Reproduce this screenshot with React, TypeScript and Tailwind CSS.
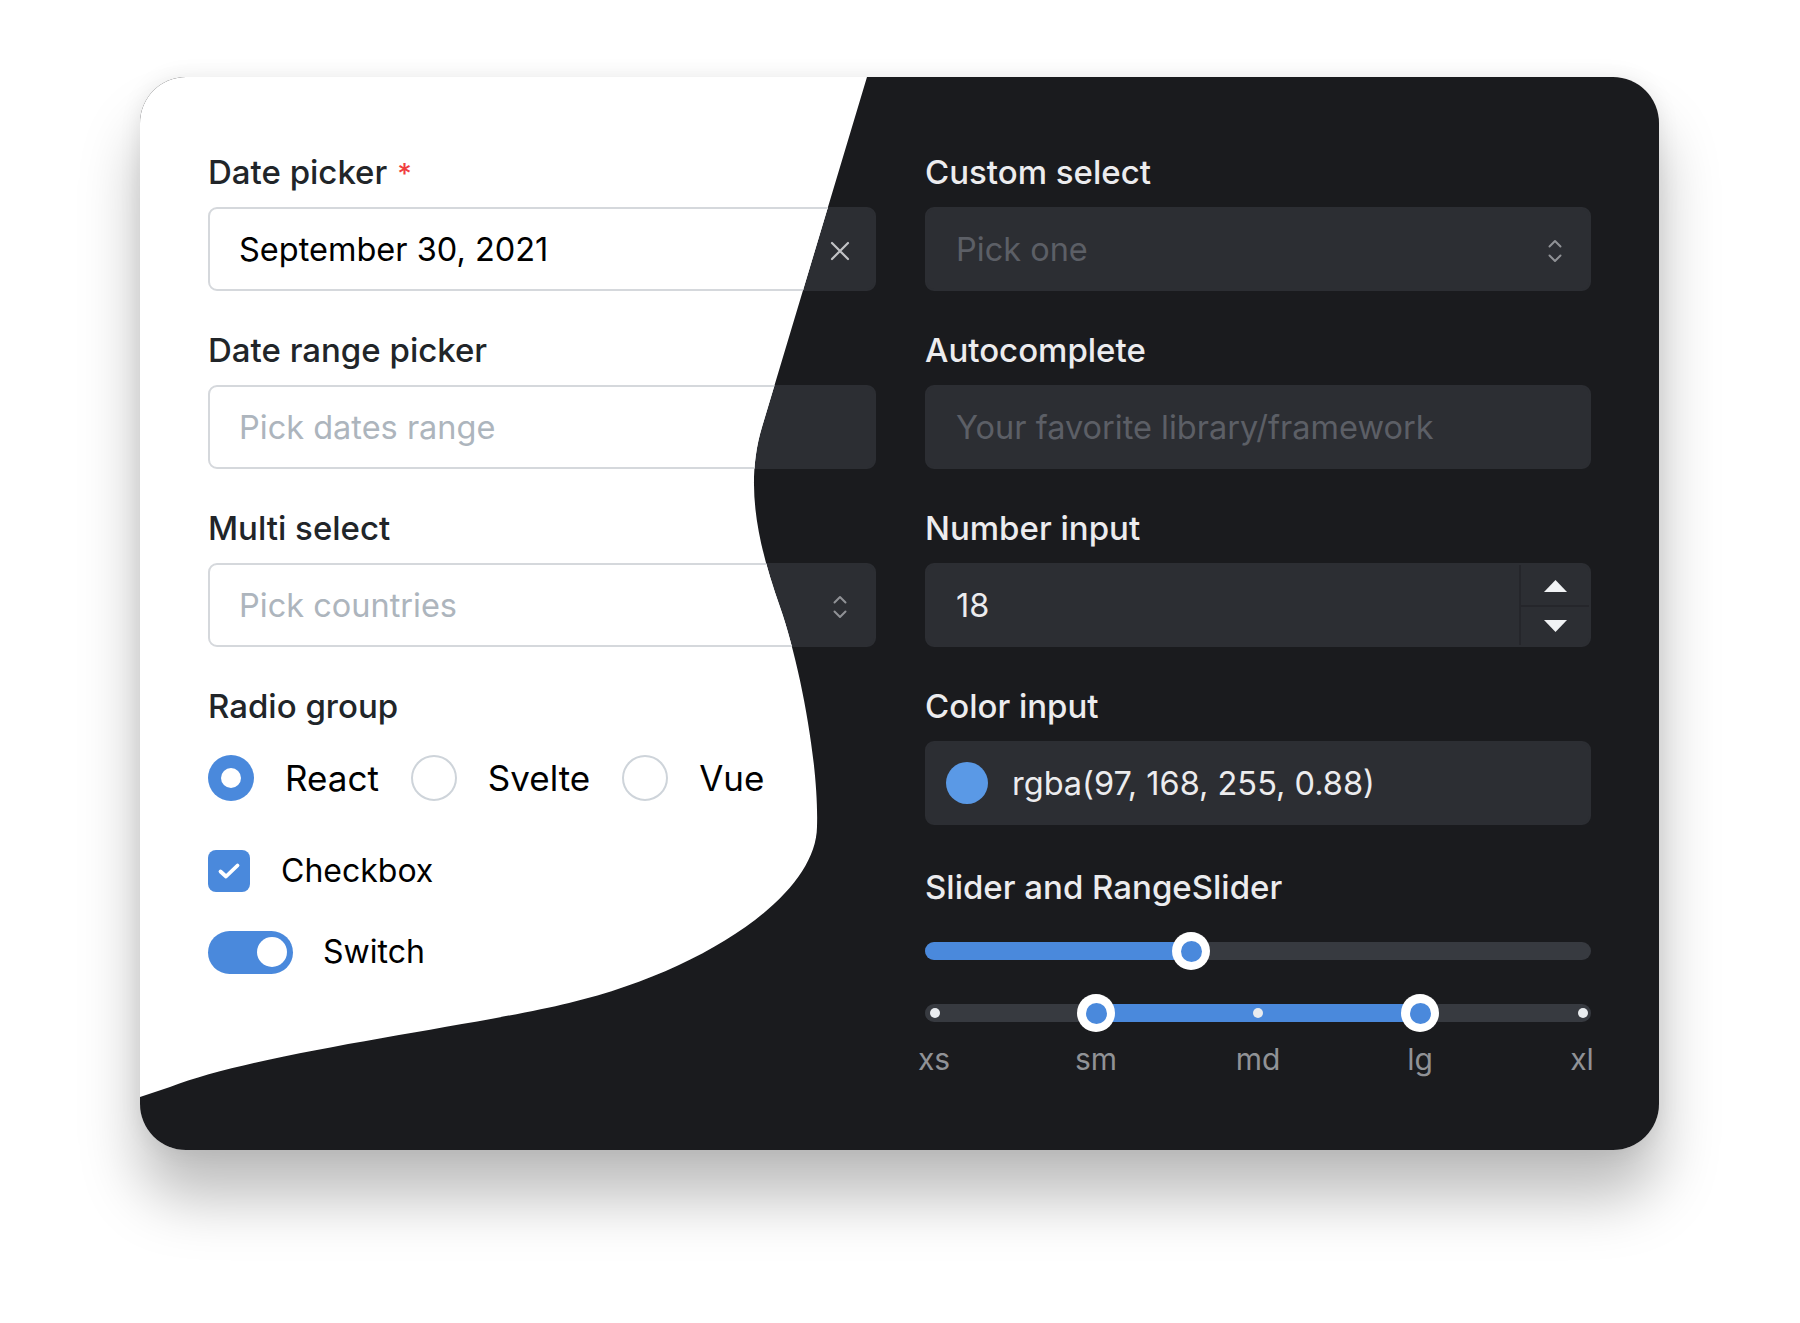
import clsx from 'clsx';

const BLUE = 'bg-[#4a89dc]';

// white part of the card, in card coordinates (1519 x 1073)
const LIGHT_PATH =
  'M0,0 L727,0 L622,350 C604,410 619,470 640,530 C661,590 679,690 677,750 C676,820 560,895 429,926 C330,950 120,975 30,1010 L0,1020 Z';

const Label = ({ dark, children, required }: { dark: boolean; children: string; required?: boolean }) => (
  <div className={clsx('h-[40px] text-[33px] leading-[40px] font-medium', dark ? 'text-[#ececee]' : 'text-[#212529]')}>
    {children}
    {required && <span className="ml-[10px] text-[28px] text-[#f03e3e]">*</span>}
  </div>
);

const inputCls = (dark: boolean) =>
  clsx(
    'mt-[15px] flex h-[84px] items-center rounded-[9px] border-2 pt-[3px] text-[32.5px]',
    dark ? 'border-[#2c2e33] bg-[#2c2e33]' : 'border-[#d5d8dc] bg-white'
  );

const Chevrons = ({ dark }: { dark: boolean }) => (
  <svg width="16" height="28" viewBox="0 0 16 28" fill="none" className={dark ? 'text-[#909296]' : 'text-[#868e96]'}>
    <polyline points="2.5,9.5 8,4 13.5,9.5" stroke="currentColor" strokeWidth="2" strokeLinecap="round" strokeLinejoin="round" />
    <polyline points="2.5,18.5 8,24 13.5,18.5" stroke="currentColor" strokeWidth="2" strokeLinecap="round" strokeLinejoin="round" />
  </svg>
);

const Field = ({
  dark,
  label,
  first,
  required,
  children,
}: {
  dark: boolean;
  label: string;
  first?: boolean;
  required?: boolean;
  children: React.ReactNode;
}) => (
  <div className={first ? '' : 'mt-[39px]'}>
    <Label dark={dark} required={required}>
      {label}
    </Label>
    {children}
  </div>
);

const Radio = ({ dark, checked, label }: { dark: boolean; checked?: boolean; label: string }) => (
  <div className="flex items-center gap-[31px]">
    {checked ? (
      <div className={clsx('flex h-[46px] w-[46px] items-center justify-center rounded-full', BLUE)}>
        <div className="h-[20px] w-[20px] rounded-full bg-white" />
      </div>
    ) : (
      <div
        className={clsx(
          'h-[46px] w-[46px] rounded-full border-2',
          dark ? 'border-[#373a40] bg-[#25262b]' : 'border-[#ced4da] bg-white'
        )}
      />
    )}
    <span className={clsx('text-[35px] leading-[46px]', dark ? 'text-[#ececee]' : 'text-black')}>{label}</span>
  </div>
);

const Thumb = ({ left }: { left: string }) => (
  <div className={clsx('absolute top-0 flex h-[38px] w-[38px] items-center justify-center rounded-full bg-white', left)}>
    <div className={clsx('h-[21px] w-[21px] rounded-full', BLUE)} />
  </div>
);

const Form = ({ dark }: { dark: boolean }) => {
  const text = dark ? 'text-[#ececee]' : 'text-black';
  const placeholder = dark ? 'text-[#5c5f66]' : 'text-[#adb5bd]';
  const track = dark ? 'bg-[#373a40]' : 'bg-[#e9ecef]';

  return (
    <div
      className={clsx(
        "grid h-full grid-cols-[668px_666px] gap-x-[49px] pl-[68px] pt-[75px] font-['Inter',sans-serif]",
        dark ? 'bg-[#1a1b1e]' : 'bg-white'
      )}
    >
      {/* left column */}
      <div className="flex flex-col">
        <Field dark={dark} label="Date picker" first required>
          <div className={clsx(inputCls(dark), 'justify-between pl-[29px] pr-[24px]')}>
            <span className={text}>September 30, 2021</span>
            <svg width="20" height="20" viewBox="0 0 20 20" className={dark ? 'text-[#c1c2c5]' : 'text-[#868e96]'}>
              <path d="M2 2 L18 18 M18 2 L2 18" stroke="currentColor" strokeWidth="2.2" strokeLinecap="round" />
            </svg>
          </div>
        </Field>
        <Field dark={dark} label="Date range picker">
          <div className={clsx(inputCls(dark), 'pl-[29px]')}>
            <span className={placeholder}>Pick dates range</span>
          </div>
        </Field>
        <Field dark={dark} label="Multi select">
          <div className={clsx(inputCls(dark), 'justify-between pl-[29px] pr-[26px]')}>
            <span className={placeholder}>Pick countries</span>
            <Chevrons dark={dark} />
          </div>
        </Field>
        <Field dark={dark} label="Radio group">
          <div className="mt-[29px] flex items-center gap-[32px]">
            <Radio dark={dark} checked label="React" />
            <Radio dark={dark} label="Svelte" />
            <Radio dark={dark} label="Vue" />
          </div>
        </Field>
        <div className="mt-[46px] flex items-center gap-[31px]">
          <div className={clsx('flex h-[42px] w-[42px] items-center justify-center rounded-[8px]', BLUE)}>
            <svg width="24" height="18" viewBox="0 0 24 18" fill="none">
              <polyline points="3.5,9.5 9,14.5 20.5,3.5" stroke="white" strokeWidth="3.8" strokeLinecap="round" strokeLinejoin="round" />
            </svg>
          </div>
          <span className={clsx('text-[32px]', text)}>Checkbox</span>
        </div>
        <div className="mt-[33px] flex items-center gap-[30px]">
          <div className={clsx('flex h-[43px] w-[85px] items-center justify-end rounded-full pr-[6px]', BLUE)}>
            <div className="h-[30px] w-[30px] rounded-full bg-white" />
          </div>
          <span className={clsx('text-[32px]', text)}>Switch</span>
        </div>
      </div>

      {/* right column */}
      <div className="flex flex-col">
        <Field dark={dark} label="Custom select" first>
          <div className={clsx(inputCls(dark), 'justify-between pl-[29px] pr-[26px]')}>
            <span className={placeholder}>Pick one</span>
            <Chevrons dark={dark} />
          </div>
        </Field>
        <Field dark={dark} label="Autocomplete">
          <div className={clsx(inputCls(dark), 'pl-[29px]')}>
            <span className={placeholder}>Your favorite library/framework</span>
          </div>
        </Field>
        <Field dark={dark} label="Number input">
          <div className={clsx(inputCls(dark), '!pt-0 items-stretch overflow-hidden')}>
            <div className={clsx('flex flex-1 items-center pl-[29px] pt-[3px]', text)}>18</div>
            <div className={clsx('flex w-[70px] flex-col border-l-2', dark ? 'border-[#25262b]' : 'border-[#ced4da]')}>
              <div
                className={clsx(
                  'flex flex-1 items-center justify-center border-b-2 pt-[2px]',
                  dark ? 'border-[#25262b]' : 'border-[#ced4da]'
                )}
              >
                <svg width="23" height="12" viewBox="0 0 23 12">
                  <polygon points="11.5,0 23,12 0,12" className={dark ? 'fill-[#f1f3f5]' : 'fill-[#495057]'} />
                </svg>
              </div>
              <div className="flex flex-1 items-center justify-center">
                <svg width="23" height="12" viewBox="0 0 23 12">
                  <polygon points="0,0 23,0 11.5,12" className={dark ? 'fill-[#f1f3f5]' : 'fill-[#495057]'} />
                </svg>
              </div>
            </div>
          </div>
        </Field>
        <Field dark={dark} label="Color input">
          <div className={clsx(inputCls(dark), 'gap-[24px] pl-[19px]')}>
            <div className="-mt-[3px] h-[42px] w-[42px] rounded-full bg-[rgba(97,168,255,0.88)]" />
            <span className={text}>rgba(97, 168, 255, 0.88)</span>
          </div>
        </Field>
        <div className="mt-[42px]">
          <Label dark={dark}>Slider and RangeSlider</Label>
        </div>

        {/* slider */}
        <div className="relative mt-[25px] flex h-[38px] items-center">
          <div className={clsx('h-[18px] w-full overflow-hidden rounded-full', track)}>
            <div className={clsx('h-full w-[266px]', BLUE)} />
          </div>
          <Thumb left="left-[247px]" />
        </div>

        {/* range slider */}
        <div className="relative mt-[24px] flex h-[38px] items-center">
          <div className={clsx('relative h-[18px] w-full rounded-full', track)}>
            <div className={clsx('absolute left-[171px] top-0 h-full w-[324px]', BLUE)} />
            <div className="absolute left-[5px] top-[4px] h-[10px] w-[10px] rounded-full bg-[#e9ecef]" />
            <div className="absolute left-[328px] top-[4px] h-[10px] w-[10px] rounded-full bg-[#e9ecef]" />
            <div className="absolute left-[653px] top-[4px] h-[10px] w-[10px] rounded-full bg-[#e9ecef]" />
          </div>
          <Thumb left="left-[152px]" />
          <Thumb left="left-[476px]" />
        </div>
        <div className="relative mt-[7px] h-[40px] text-[30px] leading-[40px] text-[#909296]">
          <span className="absolute left-[9px] -translate-x-1/2">xs</span>
          <span className="absolute left-[171px] -translate-x-1/2">sm</span>
          <span className="absolute left-[333px] -translate-x-1/2">md</span>
          <span className="absolute left-[495px] -translate-x-1/2">lg</span>
          <span className="absolute left-[657px] -translate-x-1/2">xl</span>
        </div>
      </div>
    </div>
  );
}

export default function App() {
  return (
    <div className="min-h-screen bg-white pl-[140px] pt-[77px]">
      <div className="relative h-[1073px] w-[1519px] overflow-hidden rounded-[46px] shadow-[0_48px_60px_rgba(0,0,0,0.26),0_0_22px_rgba(0,0,0,0.08)]">
        <svg width="0" height="0" className="absolute">
          <defs>
            <clipPath id="light-side" clipPathUnits="userSpaceOnUse">
              <path d={LIGHT_PATH} />
            </clipPath>
          </defs>
        </svg>
        <Form dark />
        <div className="absolute inset-0 [clip-path:url(#light-side)]">
          <Form dark={false} />
        </div>
      </div>
    </div>
  );
}
